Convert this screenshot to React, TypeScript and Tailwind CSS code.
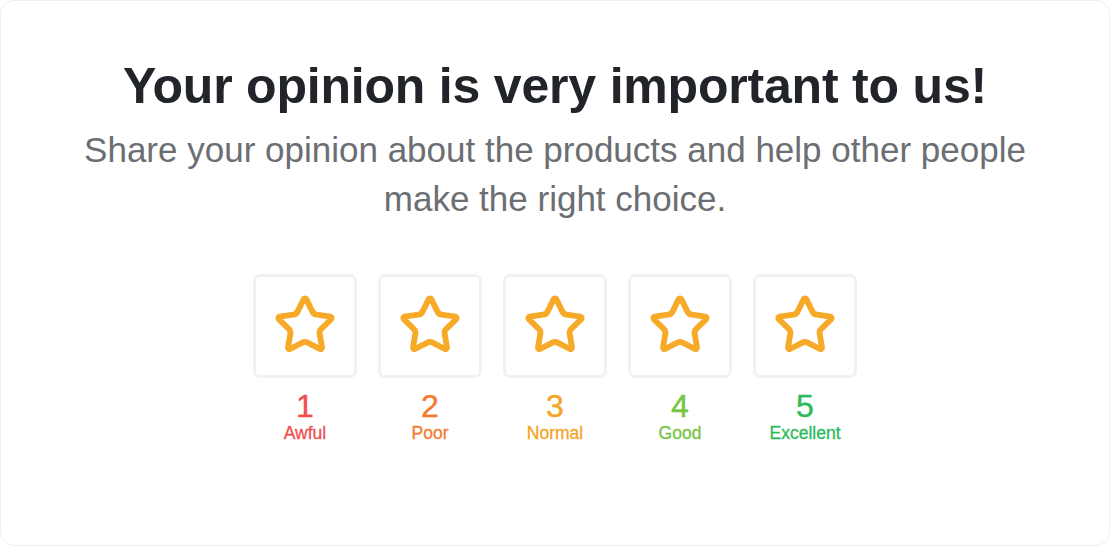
import React from "react";
import { Star } from "lucide-react";

const items = [
  { n: "1", label: "Awful", color: "text-[#f04e4f]" },
  { n: "2", label: "Poor", color: "text-[#f57a30]" },
  { n: "3", label: "Normal", color: "text-[#f5a425]" },
  { n: "4", label: "Good", color: "text-[#76c442]" },
  { n: "5", label: "Excellent", color: "text-[#2cbb5b]" },
];

export default function App() {
  return (
    <div className="w-[1110px] h-[546px] bg-white" style={{ fontFamily: '"Liberation Sans", Arial, sans-serif' }}>
      <div className="w-full h-full rounded-[14px] border border-[#eeeeee] bg-white flex flex-col items-center pt-[55px]">
        <h1 className="text-[50px] leading-[60px] font-bold text-[#212428] tracking-[-0.2px]">
          Your opinion is very important to us!
        </h1>
        <p className="mt-[9px] text-[35px] leading-[49px] text-[#6b6e72] text-center w-[980px]">
          Share your opinion about the products and help other people make the right choice.
        </p>
        <div className="mt-[51px] flex gap-[21px]">
          {items.map((it) => (
            <div key={it.n} className="flex flex-col items-center w-[104px]">
              <div className="w-[104px] h-[104px] rounded-[7px] border-[3px] border-[#f1f2f3] flex items-center justify-center">
                <Star size={64} strokeWidth={2.2} color="#f7a928" className="-mt-[2px]" />
              </div>
              <div className={`mt-[10px] text-[32px] leading-[36px] [-webkit-text-stroke:0.4px] ${it.color}`}>{it.n}</div>
              <div className={`-mt-[1px] text-[17.5px] leading-[20px] [-webkit-text-stroke:0.3px] ${it.color}`}>{it.label}</div>
            </div>
          ))}
        </div>
      </div>
    </div>
  );
}
